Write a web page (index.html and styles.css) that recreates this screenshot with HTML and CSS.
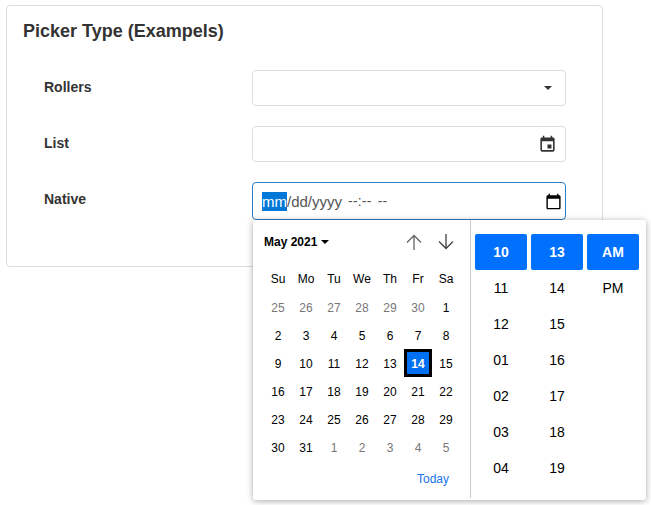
FILE: index.html
```html
<!DOCTYPE html>
<html lang="en">
<head>
<meta charset="utf-8">
<title>Picker Type</title>
<link rel="stylesheet" href="styles.css">
</head>
<body>
<main class="card">
  <h1 class="title">Picker Type (Exampels)</h1>
  <div class="row">
    <span class="label">Rollers</span>
    <div class="field">
      <span class="caret"></span>
    </div>
  </div>
  <div class="row">
    <span class="label">List</span>
    <div class="field">
      <svg class="icon-event" viewBox="0 0 24 24"><path d="M17 12h-5v5h5v-5zM16 1v2H8V1H6v2H5c-1.11 0-1.99.9-1.99 2L3 19c0 1.1.89 2 2 2h14c1.1 0 2-.9 2-2V5c0-1.1-.9-2-2-2h-1V1h-2zm3 18H5V8h14v11z"/></svg>
    </div>
  </div>
  <div class="row">
    <span class="label">Native</span>
    <div class="field field-focus">
      <span class="date-text"><span class="sel">mm</span>/dd/yyyy</span>
      <span class="time-text">--:-- --</span>
      <svg class="icon-cal" viewBox="0 0 24 24"><path d="M20 3h-1V1h-2v2H7V1H5v2H4c-1.1 0-2 .9-2 2v16c0 1.1.9 2 2 2h16c1.1 0 2-.9 2-2V5c0-1.1-.9-2-2-2zm0 18H4V8h16v13z"/></svg>
    </div>
  </div>
</main>

<div class="popup">
  <section class="cal">
    <div class="cal-head">
      <span class="month">May 2021<span class="month-caret"></span></span>
      <span class="arrows">
        <svg class="arrow arrow-up" viewBox="0 0 16 16"><path d="M8 16V1.5M1 8.5l7-7 7 7"/></svg>
        <svg class="arrow arrow-down" viewBox="0 0 16 16"><path d="M8 0v14.5M1 7.5l7 7 7-7"/></svg>
      </span>
    </div>
    <div class="grid">
      <span class="dow">Su</span><span class="dow">Mo</span><span class="dow">Tu</span><span class="dow">We</span><span class="dow">Th</span><span class="dow">Fr</span><span class="dow">Sa</span>
      <span class="out">25</span><span class="out">26</span><span class="out">27</span><span class="out">28</span><span class="out">29</span><span class="out">30</span><span>1</span>
      <span>2</span><span>3</span><span>4</span><span>5</span><span>6</span><span>7</span><span>8</span>
      <span>9</span><span>10</span><span>11</span><span>12</span><span>13</span><span class="today">14</span><span>15</span>
      <span>16</span><span>17</span><span>18</span><span>19</span><span>20</span><span>21</span><span>22</span>
      <span>23</span><span>24</span><span>25</span><span>26</span><span>27</span><span>28</span><span>29</span>
      <span>30</span><span>31</span><span class="out">1</span><span class="out">2</span><span class="out">3</span><span class="out">4</span><span class="out">5</span>
    </div>
    <div class="cal-foot"><span class="today-link">Today</span></div>
  </section>
  <section class="time">
    <div class="col"><span class="on">10</span><span>11</span><span>12</span><span>01</span><span>02</span><span>03</span><span>04</span></div>
    <div class="col"><span class="on">13</span><span>14</span><span>15</span><span>16</span><span>17</span><span>18</span><span>19</span></div>
    <div class="col"><span class="on">AM</span><span>PM</span></div>
  </section>
</div>
</body>
</html>
```
FILE: styles.css
```css
* { box-sizing: border-box; }
html, body { margin: 0; padding: 0; background: #fff; }
body {
  font-family: "Liberation Sans", Arial, sans-serif;
  color: #333;
  width: 651px;
  height: 505px;
  overflow: hidden;
  position: relative;
}
.card {
  width: 597px;
  height: 262px;
  margin: 5px 0 0 6px;
  padding: 13px 0 0 16px;
  border: 1px solid #ddd;
  border-radius: 4px;
}
.title {
  margin: 0 0 26px;
  font-size: 18px;
  line-height: 25px;
  font-weight: 700;
  color: #333;
}
.row {
  display: flex;
  align-items: flex-start;
  margin-bottom: 20px;
  padding-left: 21px;
}
.label {
  width: 208px;
  font-size: 14px;
  font-weight: 700;
  line-height: 34px;
}
.field {
  flex: none;
  width: 314px;
  height: 36px;
  border: 1px solid #ddd;
  border-radius: 4px;
  display: flex;
  align-items: center;
  justify-content: flex-end;
  position: relative;
  background: #fff;
}
.caret {
  width: 0;
  height: 0;
  margin-right: 13px;
  border-left: 4px solid transparent;
  border-right: 4px solid transparent;
  border-top: 4px solid #333;
}
.icon-event { width: 19px; height: 19px; margin-right: 8px; fill: #333; }
.icon-cal { width: 17px; height: 17px; margin-left: auto; margin-right: 2px; fill: #000; }
.field-focus {
  border-color: #2f7ec4;
  height: 38px;
  justify-content: flex-start;
  padding: 0 1px 0 9px;
  font-size: 15px;
  color: #555;
  margin-bottom: -2px;
}
.sel { background: #0078d7; color: #fff; padding: 1px 0; }
.date-text { margin-right: 6px; }
.time-text { white-space: pre; font-size: 14px; word-spacing: 2px; letter-spacing: .2px; }

.popup {
  position: absolute;
  left: 253px;
  top: 220px;
  width: 393px;
  height: 280px;
  display: flex;
  background: #fff;
  border-radius: 3px;
  box-shadow: 0 1px 6px rgba(0, 0, 0, .35);
  color: #000;
}
.cal {
  width: 218px;
  height: 278px;
  padding: 0 10px 0 11px;
  border-right: 1px solid #ccc;
}
.cal-head {
  height: 45px;
  display: flex;
  align-items: center;
  justify-content: space-between;
  padding: 0 6px 2px 0;
}
.month { font-size: 12px; font-weight: 700; display: flex; align-items: center; }
.month-caret {
  margin-left: 4px;
  border-left: 4px solid transparent;
  border-right: 4px solid transparent;
  border-top: 4px solid #000;
}
.arrows { display: flex; gap: 16px; }
.arrow { width: 16px; height: 16px; fill: none; stroke-width: 1.3; display: block; }
.arrow-up { stroke: #666; }
.arrow-down { stroke: #444; }
.grid {
  display: grid;
  grid-template-columns: repeat(7, 28px);
  grid-auto-rows: 28px;
  font-size: 12px;
  text-align: center;
  line-height: 30px;
}
.grid .dow { line-height: 28px; }
.out { color: #777; }
.today {
  background: #0070f3;
  border: 3px solid #000;
  color: #fff;
  font-weight: 700;
  line-height: 24px;
}
.cal-foot {
  display: flex;
  justify-content: flex-end;
  padding: 4px 11px 0 0;
  font-size: 12px;
  line-height: 28px;
}
.today-link { color: #1a73e8; }
.time {
  display: flex;
  gap: 4px;
  padding: 14px 0 0 4px;
}
.col {
  width: 52px;
  display: flex;
  flex-direction: column;
  font-size: 14px;
}
.col span {
  height: 36px;
  line-height: 36px;
  text-align: center;
}
.col .on {
  background: #0070ff;
  color: #fff;
  font-weight: 700;
  border-radius: 2px;
}
```
